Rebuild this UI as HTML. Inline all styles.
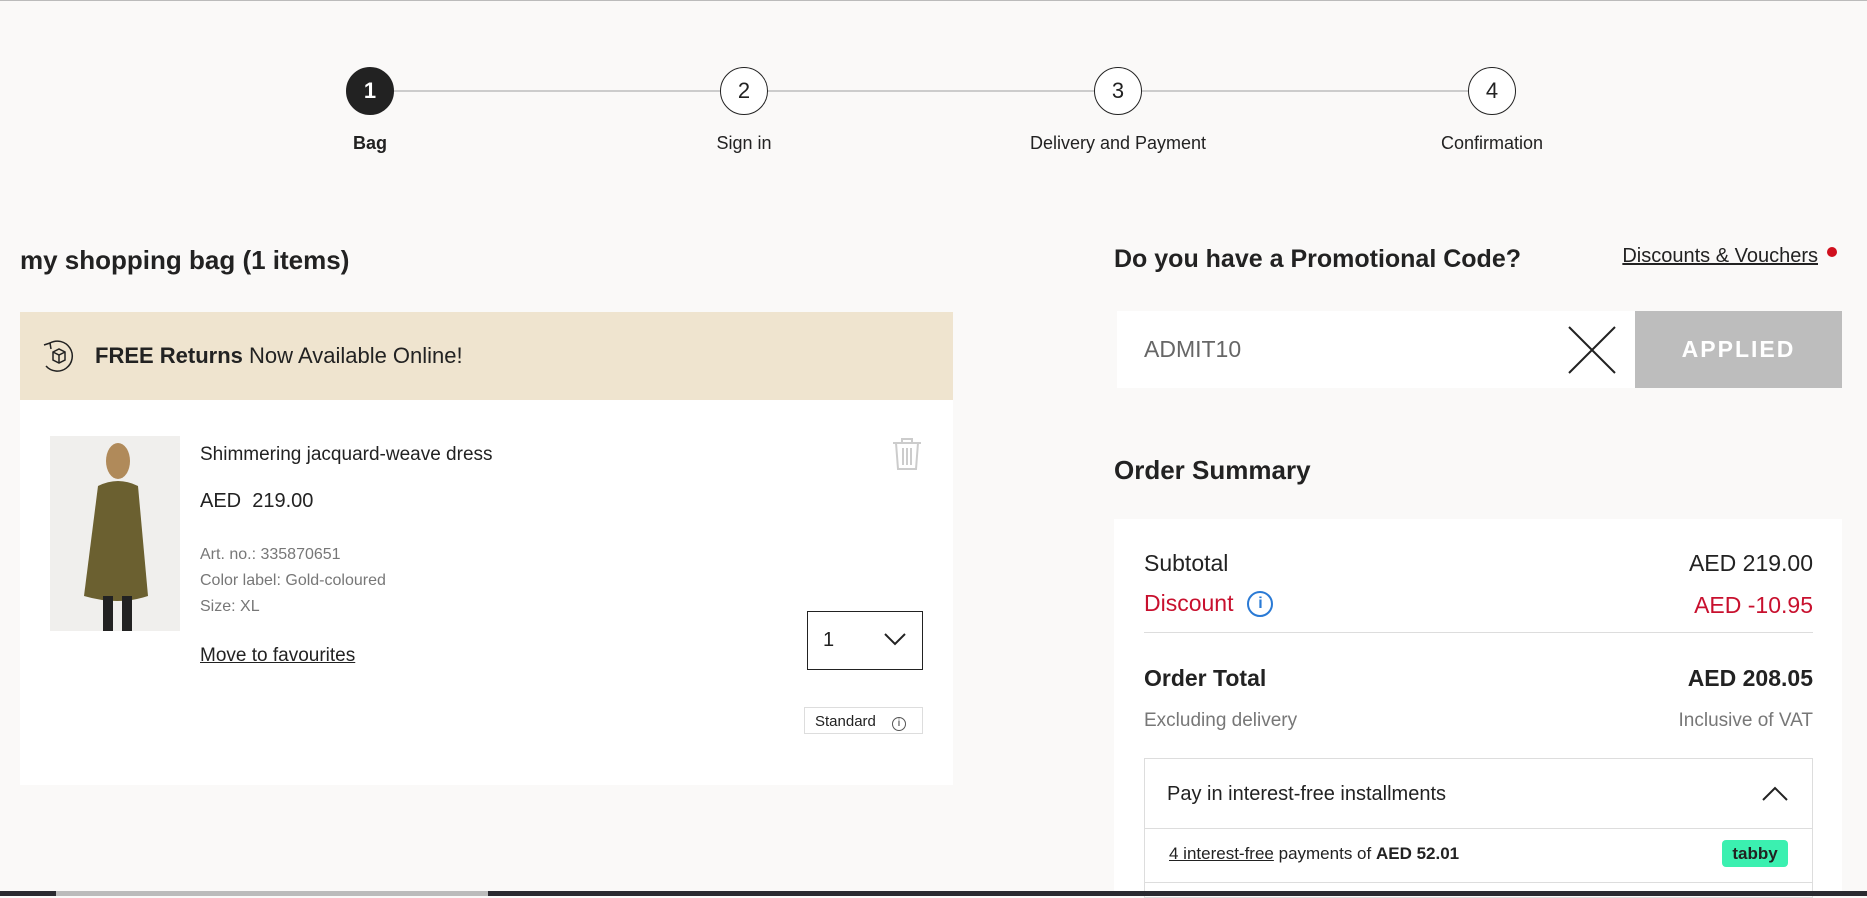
<!DOCTYPE html>
<html><head><meta charset="utf-8"><style>
*{box-sizing:border-box;margin:0;padding:0}
body{width:1867px;height:895px;overflow:hidden;background:#faf9f8;font-family:"Liberation Sans",sans-serif;color:#222;position:relative;border-top:1px solid #bbb}
.a{position:absolute;white-space:nowrap}
.c{position:absolute;width:48px;height:48px;border-radius:50%;border:1px solid #222;background:#fff;text-align:center;line-height:46px;font-size:22px;top:66px}
.lbl{position:absolute;top:132px;font-size:18px;transform:translateX(-50%)}
</style></head><body>
<div class="a" style="left:370px;top:89px;width:1122px;height:2px;background:#ccc"></div>
<div class="c" style="left:346px;background:#222;color:#fff;font-weight:bold">1</div>
<div class="c" style="left:720px">2</div>
<div class="c" style="left:1094px">3</div>
<div class="c" style="left:1468px">4</div>
<div class="lbl" style="left:370px;font-weight:bold">Bag</div>
<div class="lbl" style="left:744px">Sign in</div>
<div class="lbl" style="left:1118px">Delivery and Payment</div>
<div class="lbl" style="left:1492px">Confirmation</div>

<div class="a" style="left:20px;top:244px;font-size:26px;font-weight:bold">my shopping bag (1 items)</div>
<div class="a" style="left:20px;top:311px;width:933px;height:88px;background:#efe4cf"></div>
<svg class="a" style="left:40px;top:336px" width="38" height="38" viewBox="0 0 38 38" fill="none" stroke="#222" stroke-width="1.5"><path d="M10 6A15 15 0 1 1 6 29"/><path d="M4 8l6-2 1 6"/><path d="M13 15l6-3 6 3v8l-6 3-6-3z M13 15l6 3 6-3 M19 18v8"/></svg>
<div class="a" style="left:95px;top:342px;font-size:22px"><b>FREE Returns</b> Now Available Online!</div>
<div class="a" style="left:20px;top:399px;width:933px;height:385px;background:#fff"></div>
<div class="a" style="left:50px;top:435px;width:130px;height:195px;background:#f0efed"></div>
<svg class="a" style="left:50px;top:435px" width="130" height="195"><ellipse cx="68" cy="25" rx="12" ry="18" fill="#b08a5a"/><path d="M48 50 Q68 40 88 50 L98 160 Q68 170 34 160Z" fill="#6b6030"/><rect x="53" y="160" width="10" height="35" fill="#222"/><rect x="72" y="160" width="10" height="35" fill="#222"/></svg>
<div class="a" style="left:200px;top:443px;font-size:19px">Shimmering jacquard-weave dress</div>
<div class="a" style="left:200px;top:489px;font-size:20px">AED&nbsp; 219.00</div>
<div class="a" style="left:200px;top:541px;font-size:16px;color:#777;line-height:26px">Art. no.: 335870651<br>Color label: Gold-coloured<br>Size: XL</div>
<div class="a" style="left:200px;top:644px;font-size:19px;text-decoration:underline">Move to favourites</div>
<svg class="a" style="left:891px;top:436px" width="32" height="34" fill="none" stroke="#ccc" stroke-width="2"><path d="M2 6h28M11 6V2h10v4M5 6l2 26h18l2-26M12 11v17M16 11v17M20 11v17"/></svg>
<div class="a" style="left:807px;top:610px;width:116px;height:59px;border:1.5px solid #222;background:#fff"><span class="a" style="left:15px;top:17px;font-size:20px">1</span><svg class="a" style="left:76px;top:20px" width="22" height="14" fill="none" stroke="#222" stroke-width="2"><path d="M1 2l10 10 10-10"/></svg></div>
<div class="a" style="left:804px;top:706px;width:119px;height:27px;border:1px solid #ddd;font-size:15px;padding:5px 0 0 10px">Standard <span style="display:inline-block;width:14px;height:14px;border:1px solid #555;border-radius:50%;font-size:10px;text-align:center;line-height:12px;margin-left:12px">i</span></div>

<div class="a" style="left:1114px;top:244px;font-size:25px;font-weight:bold">Do you have a Promotional Code?</div>
<div class="a" style="right:49px;top:244px;font-size:20px;text-decoration:underline">Discounts &amp; Vouchers</div>
<div class="a" style="left:1827px;top:246px;width:10px;height:10px;border-radius:50%;background:#d0101e"></div>
<div class="a" style="left:1117px;top:310px;width:518px;height:77px;background:#fff"></div>
<div class="a" style="left:1144px;top:335px;font-size:23px;color:#666">ADMIT10</div>
<svg class="a" style="left:1567px;top:324px" width="50" height="50" stroke="#222" stroke-width="2"><path d="M2 2l46 46M48 2L2 48"/></svg>
<div class="a" style="left:1635px;top:310px;width:207px;height:77px;background:#bdbdbd;color:#fff;font-weight:bold;font-size:23px;letter-spacing:2px;text-align:center;line-height:77px">APPLIED</div>
<div class="a" style="left:1114px;top:454px;font-size:26px;font-weight:bold">Order Summary</div>
<div class="a" style="left:1114px;top:518px;width:728px;height:377px;background:#fff"></div>
<div class="a" style="left:1144px;top:549px;font-size:23px">Subtotal</div>
<div class="a" style="right:54px;top:549px;font-size:23px">AED 219.00</div>
<div class="a" style="left:1144px;top:589px;font-size:23px;color:#c8102e;display:flex;align-items:center">Discount <span style="display:inline-block;width:26px;height:26px;border:2px solid #2a7ad5;border-radius:50%;color:#2a7ad5;font-size:16px;font-weight:bold;text-align:center;line-height:22px;margin-left:14px">i</span></div>
<div class="a" style="right:54px;top:591px;font-size:23px;color:#c8102e">AED -10.95</div>
<div class="a" style="left:1144px;top:631px;width:669px;height:1px;background:#ddd"></div>
<div class="a" style="left:1144px;top:664px;font-size:23px;font-weight:bold">Order Total</div>
<div class="a" style="right:54px;top:664px;font-size:23px;font-weight:bold">AED 208.05</div>
<div class="a" style="left:1144px;top:709px;font-size:19px;color:#777">Excluding delivery</div>
<div class="a" style="right:54px;top:709px;font-size:19px;color:#777">Inclusive of VAT</div>
<div class="a" style="left:1144px;top:757px;width:669px;height:140px;border:1px solid #ddd"></div>
<div class="a" style="left:1144px;top:827px;width:669px;height:1px;background:#ddd"></div>
<div class="a" style="left:1144px;top:881px;width:669px;height:1px;background:#ddd"></div>
<div class="a" style="left:1167px;top:782px;font-size:20px">Pay in interest-free installments</div>
<svg class="a" style="left:1762px;top:785px" width="26" height="16" fill="none" stroke="#222" stroke-width="2"><path d="M1 14L13 2l12 12"/></svg>
<div class="a" style="left:1169px;top:843px;font-size:17px"><u>4 interest-free</u> payments of <b>AED 52.01</b></div>
<div class="a" style="left:1722px;top:839px;width:66px;height:27px;background:#3bf0b0;border-radius:4px;font-size:17px;font-weight:bold;text-align:center;line-height:27px">tabby</div>
<div class="a" style="left:0;top:890px;width:1867px;height:5px;background:#2a2a30"></div>
<div class="a" style="left:56px;top:890px;width:432px;height:5px;background:#bbb"></div>
</body></html>
